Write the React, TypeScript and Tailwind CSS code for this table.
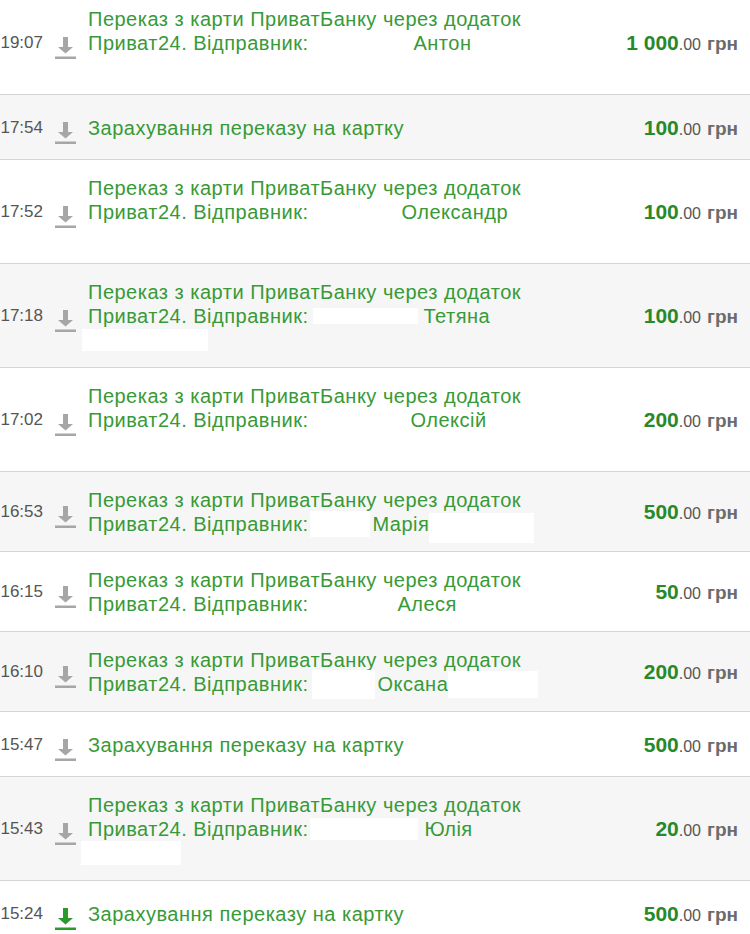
import React from "react";

type Row = {
  time: string;
  amount: string;
  kind: "transfer" | "topup";
  name?: string;
  lines?: 2 | 3;
  spacer?: string;
  box?: string;
  after?: string;
  line3?: string;
  green?: boolean;
};

const rows: Row[] = [
  { time: "19:07", amount: "1 000", kind: "transfer", name: "Антон", lines: 3, spacer: "w-[105px]" },
  { time: "17:54", amount: "100", kind: "topup" },
  { time: "17:52", amount: "100", kind: "transfer", name: "Олександр", lines: 3, spacer: "w-[93px]" },
  {
    time: "17:18",
    amount: "100",
    kind: "transfer",
    name: "Тетяна",
    lines: 3,
    spacer: "w-[115px]",
    box: "ml-[5px] w-[105px] h-[16px]",
    line3: "-ml-[6px] w-[126px] h-[22px]",
  },
  { time: "17:02", amount: "200", kind: "transfer", name: "Олексій", lines: 3, spacer: "w-[102px]" },
  {
    time: "16:53",
    amount: "500",
    kind: "transfer",
    name: "Марія",
    lines: 2,
    spacer: "w-[64px]",
    box: "ml-[2px] w-[60px] h-[26px]",
    after: "ml-0 w-[105px] h-[30px] translate-y-[4px]",
  },
  { time: "16:15", amount: "50", kind: "transfer", name: "Алеся", lines: 2, spacer: "w-[89px]" },
  {
    time: "16:10",
    amount: "200",
    kind: "transfer",
    name: "Оксана",
    lines: 2,
    spacer: "w-[69px]",
    box: "ml-[4px] w-[63px] h-[29px]",
    after: "ml-0 w-[90px] h-[27px]",
  },
  { time: "15:47", amount: "500", kind: "topup" },
  {
    time: "15:43",
    amount: "20",
    kind: "transfer",
    name: "Юлія",
    lines: 3,
    spacer: "w-[116px]",
    box: "ml-[2px] w-[108px] h-[22px]",
    line3: "-ml-[7px] w-[100px] h-[24px]",
  },
  { time: "15:24", amount: "500", kind: "topup", green: true },
];

function InIcon({ green }: { green?: boolean }) {
  const c = green ? "#2a9a2a" : "#a6a6a6";
  return (
    <svg width="21" height="28" viewBox="0 0 21 28" className="translate-y-[2px]">
      <rect x="8" y="6" width="5" height="10" fill={c} />
      <polygon points="3,16 18,16 10.5,22.5" fill={c} />
      <rect x="0" y="25.5" width="21" height="2.5" fill={c} />
    </svg>
  );
}

export default function App() {
  return (
    <div className="min-h-screen bg-white overflow-hidden font-['Liberation_Sans',Arial,sans-serif]">
      <div className="-mt-[9px]">
        {rows.map((r, i) => (
          <div
            key={r.time}
            className={`flex items-center min-h-[65px] pt-4 pb-[15px] border-b border-[#d4d4d4] ${
              i % 2 === 1 ? "bg-[#f6f6f6]" : "bg-white"
            }`}
          >
            <div className="w-[43px] shrink-0 flex justify-end text-[17px] text-[#555] whitespace-nowrap">
              {r.time}
            </div>
            <div className="ml-[12px] w-[21px] shrink-0 flex items-center">
              <InIcon green={r.green} />
            </div>
            <div className="ml-[12px] flex-1 text-[20px] tracking-[0.5px] leading-[24px] text-[#379a37] whitespace-nowrap">
              {r.kind === "topup" ? (
                <div>Зарахування переказу на картку</div>
              ) : (
                <>
                  <div>Переказ з карти ПриватБанку через додаток</div>
                  <div className="flex items-center h-[24px]">
                    <span>Приват24. Відправник:</span>
                    <span className={`${r.spacer} shrink-0 flex items-center`}>
                      {r.box && <span className={`${r.box} bg-white block`} />}
                    </span>
                    <span>{r.name}</span>
                    {r.after && <span className={`${r.after} bg-white block`} />}
                  </div>
                  {r.lines === 3 && (
                    <div className="h-[24px] flex items-center">
                      {r.line3 && <span className={`${r.line3} bg-white block`} />}
                    </div>
                  )}
                </>
              )}
            </div>
            <div className="pr-[12px] shrink-0 flex items-baseline whitespace-nowrap">
              <span className="text-[21px] font-bold text-[#28892a]">{r.amount}</span>
              <span className="text-[16px] text-[#555]">.00</span>
              <span className="ml-[6px] text-[19px] font-bold text-[#6b6b6b]">грн</span>
            </div>
          </div>
        ))}
      </div>
    </div>
  );
}
